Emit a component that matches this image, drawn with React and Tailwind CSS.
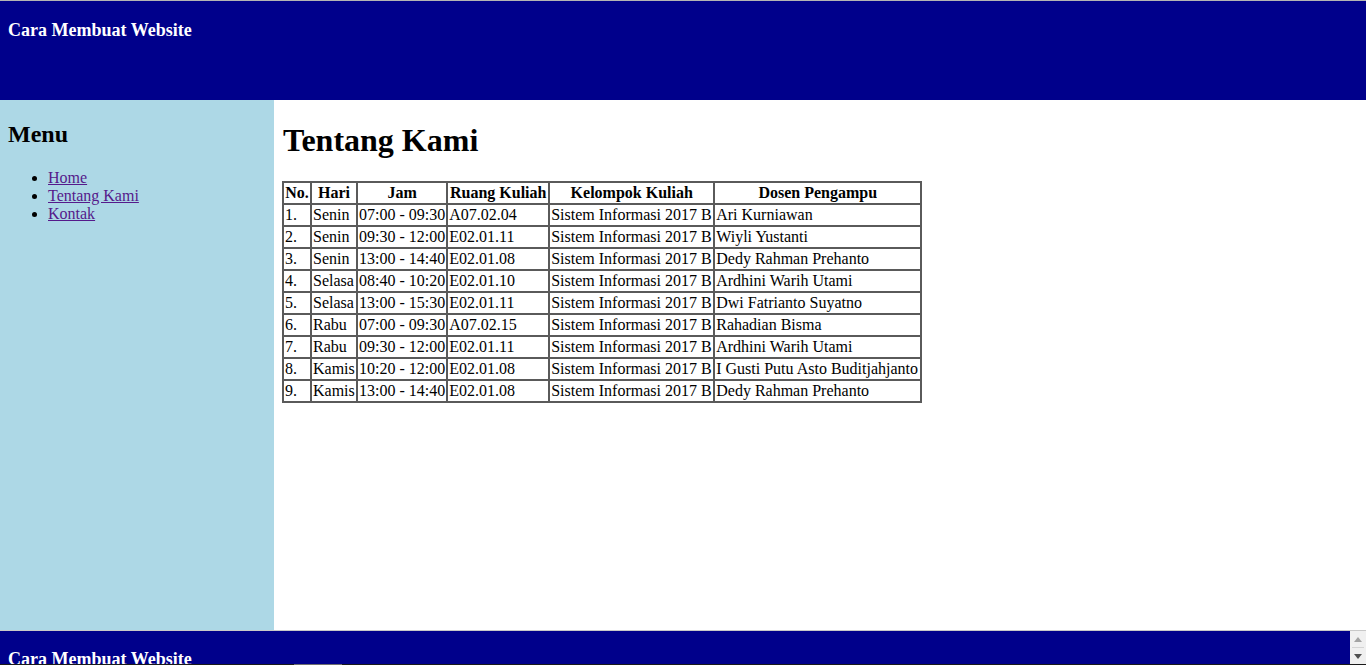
import React from "react";

const rows = [
  ["1.", "Senin", "07:00 - 09:30", "A07.02.04", "Sistem Informasi 2017 B", "Ari Kurniawan"],
  ["2.", "Senin", "09:30 - 12:00", "E02.01.11", "Sistem Informasi 2017 B", "Wiyli Yustanti"],
  ["3.", "Senin", "13:00 - 14:40", "E02.01.08", "Sistem Informasi 2017 B", "Dedy Rahman Prehanto"],
  ["4.", "Selasa", "08:40 - 10:20", "E02.01.10", "Sistem Informasi 2017 B", "Ardhini Warih Utami"],
  ["5.", "Selasa", "13:00 - 15:30", "E02.01.11", "Sistem Informasi 2017 B", "Dwi Fatrianto Suyatno"],
  ["6.", "Rabu", "07:00 - 09:30", "A07.02.15", "Sistem Informasi 2017 B", "Rahadian Bisma"],
  ["7.", "Rabu", "09:30 - 12:00", "E02.01.11", "Sistem Informasi 2017 B", "Ardhini Warih Utami"],
  ["8.", "Kamis", "10:20 - 12:00", "E02.01.08", "Sistem Informasi 2017 B", "I Gusti Putu Asto Buditjahjanto"],
  ["9.", "Kamis", "13:00 - 14:40", "E02.01.08", "Sistem Informasi 2017 B", "Dedy Rahman Prehanto"],
];

const heads = [
  ["No.", "w-[28px]"],
  ["Hari", "w-[46px]"],
  ["Jam", "w-[90px]"],
  ["Ruang Kuliah", "w-[102px]"],
  ["Kelompok Kuliah", "w-[165px]"],
  ["Dosen Pengampu", "w-[207px]"],
];

export default function App() {
  return (
    <div
      className="h-[665px] w-[1366px] flex flex-col overflow-hidden bg-white text-black"
      style={{ fontFamily: '"Liberation Serif", "Times New Roman", serif' }}
    >
      <div className="h-px shrink-0 bg-[#b4b4b4]" />
      <header className="h-[99px] shrink-0 bg-[#00008b] px-2 pt-[19px]">
        <h3 className="text-[18px] font-bold text-white leading-[21px]">Cara Membuat Website</h3>
      </header>
      <div className="h-[530px] shrink-0 flex">
        <aside className="w-[274px] bg-[#add8e6] px-2 pt-[21px]">
          <h2 className="text-[24px] font-bold leading-[27px]">Menu</h2>
          <ul className="list-disc pl-10 mt-[21px] text-[16px] leading-[18px]">
            <li><a href="#" className="underline text-[#551a8b]">Home</a></li>
            <li><a href="#" className="underline text-[#551a8b]">Tentang Kami</a></li>
            <li><a href="#" className="underline text-[#551a8b]">Kontak</a></li>
          </ul>
        </aside>
        <main className="flex-1 px-2 pt-[22px]">
          <h1 className="ml-px text-[32px] font-bold leading-[36px] mb-[23px]">Tentang Kami</h1>
          <table className="border-separate border-spacing-0 border border-[#5a5a5a] text-[16px] leading-[18px]">
            <thead>
              <tr>
                {heads.map(([h, w]) => (
                  <th key={h} className={`${w} border border-[#5a5a5a] p-px font-bold text-center whitespace-nowrap`}>{h}</th>
                ))}
              </tr>
            </thead>
            <tbody>
              {rows.map((r) => (
                <tr key={r[0]}>
                  {r.map((c, i) => (
                    <td key={i} className="border border-[#5a5a5a] p-px whitespace-nowrap">{c}</td>
                  ))}
                </tr>
              ))}
            </tbody>
          </table>
        </main>
      </div>
      <footer className="flex-1 min-h-0 flex flex-col border-t border-[#c8c8c8]">
        <div className="flex-1 flex min-h-0">
          <div className="flex-1 bg-[#00008b] px-2 pt-[18px] overflow-hidden">
            <h3 className="text-[18px] font-bold text-white leading-[21px] whitespace-nowrap">Cara Membuat Website</h3>
          </div>
          <div className="w-4 bg-[#f0f0f0] flex flex-col items-center">
            <div className="h-4 flex items-center justify-center">
              <svg width="8" height="5" viewBox="0 0 8 5"><path d="M0 5 L4 0 L8 5 Z" fill="#a3a3a3" /></svg>
            </div>
            <div className="h-px w-3 bg-[#d4d4d4]" />
            <div className="flex-1 flex items-center justify-center">
              <svg width="8" height="5" viewBox="0 0 8 5"><path d="M0 0 L8 0 L4 5 Z" fill="#505050" /></svg>
            </div>
          </div>
        </div>
        <div className="h-px shrink-0 bg-[#1a1a1a] flex">
          <div className="ml-[294px] w-[48px] bg-[#6e6e6e]" />
        </div>
      </footer>
    </div>
  );
}
